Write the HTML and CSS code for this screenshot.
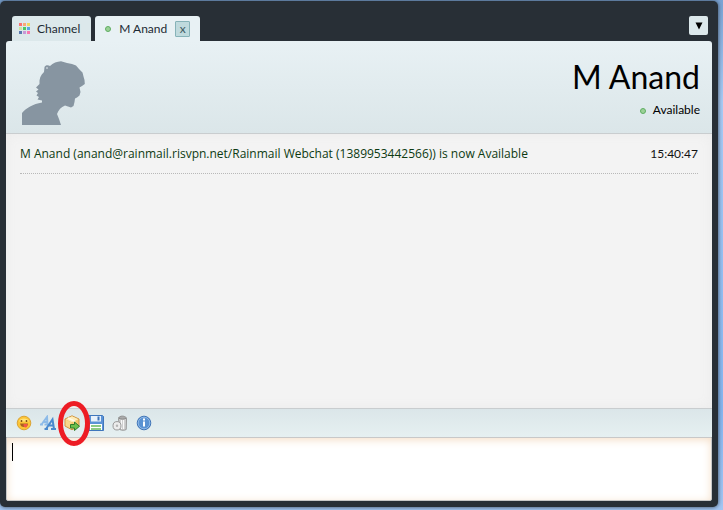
FILE: index.html
```html
<!DOCTYPE html>
<html lang="en">

<head>
  <meta charset="UTF-8">
  <meta name="viewport" content="width=device-width, initial-scale=1.0">
  <title>M Anand</title>
  <link rel="stylesheet" href="styles.css">
</head>

<body>
  <div class="window">
    <nav class="tabs">
      <button type="button" class="tab">
        <svg width="11" height="11" viewBox="0 0 11 11">
          <path fill="#fb7070" d="M0 0h3v3H0z" />
          <path fill="#f9a878" d="M4 0h3v3H4z" />
          <path fill="#f0d860" d="M8 0h3v3H8z" />
          <path fill="#c8e6a0" d="M0 4h3v3H0z" />
          <path fill="#4cc860" d="M4 4h3v3H4z" />
          <path fill="#58a8e0" d="M8 4h3v3H8z" />
          <path fill="#5878b0" d="M0 8h3v3H0z" />
          <path fill="#c898d8" d="M4 8h3v3H4z" />
          <path fill="#f878b0" d="M8 8h3v3H8z" />
        </svg>
        Channel
      </button>
      <div class="tab active">
        <span class="status-dot"></span>
        M Anand
        <button type="button" class="close" aria-label="Close chat">x</button>
      </div>
      <button type="button" class="tab-menu" aria-label="Chat list">
        <svg width="8" height="8" viewBox="0 0 8 8">
          <path d="M0.500 0.500h7L4 7.500z" />
        </svg>
      </button>
    </nav>

    <header class="contact">
      <svg width="64" height="64" viewBox="0 0 64 64">
        <path fill="#8795a1" d="M0 64V52C4 47 11 43 20 41.500V39.500L15.500 38.500 17 36 14.500 34.500 16 32 14 30.500 16.500 28.500 14 26.500 17.500 23C17 18 18.500 14 22 11L22.500 6C23.500 4 26 4 28 5 31 2 35 .5 39 .3L45 2 50 3 54 4.500 57 8 60.500 11.500 61.500 15.500 62.500 19 62.800 23 60 25 57.500 26.500 58.500 31 57.500 34.500 55 36.500 53 37.500 52.500 41 51.500 45 49 46.500 43 44.500C39 46 36.500 49 35 53L37 58 39 64z" />
        <circle cx="25" cy="7" r="1" fill="#c3cdd4" />
      </svg>
      <div class="contact-info">
        <h1>M Anand</h1>
        <p class="status"><span class="status-dot"></span> Available</p>
      </div>
    </header>

    <main class="messages">
      <div class="message">
        <span>M Anand (anand@rainmail.risvpn.net/Rainmail Webchat (1389953442566)) is now Available</span>
        <time>15:40:47</time>
      </div>
    </main>

    <div class="toolbar">
      <button type="button" class="tool" aria-label="Insert smiley">
        <svg width="16" height="16" viewBox="0 0 16 16">
          <circle cx="8" cy="8" r="6.800" fill="#fcc536" stroke="#dba437" />
          <path d="M2.800 6.500a5.500 4.500 0 0 1 10.400 0z" fill="#ffe27a" />
          <circle cx="5.500" cy="6" r=".9" fill="#7a4a12" />
          <circle cx="10.500" cy="6" r=".9" fill="#7a4a12" />
          <path d="M4 8.500h8c0 2.500-1.500 3.500-4 3.500S4.500 11 4 8.500z" fill="#a8641e" />
          <path d="M7.500 9h4c0 2-.5 3.500-2 3.500s-2-1.500-2-3.500z" fill="#f4564a" />
        </svg>
      </button>
      <button type="button" class="tool" aria-label="Change font">
        <svg width="16" height="16" viewBox="0 0 16 16">
          <path d="M0 9.500h3M4.500 9.500h4M1.500 9.500L7 2l.5 7.500M3.500 7h4" fill="none" stroke="#8dbbe8" stroke-width="2" />
          <path d="M4.500 14h3.500M11 14h5M6 14L12.500 4.500l1.500 9.500M9 10.500h5" fill="none" stroke="#4a8ace" stroke-width="2" />
        </svg>
      </button>
      <button type="button" class="tool" aria-label="Send file">
        <svg width="16" height="16" viewBox="0 0 16 16">
          <path d="M8 .8l7 3.200v7L8 14.800 1 11V4z" fill="#f3c66b" stroke="#cf9440" />
          <path d="M8 1.300l6.300 2.900L8 7.300 1.700 4.200z" fill="#fdebb8" />
          <path d="M1.700 4.800L7.500 7.600v6.200L1.700 10.700z" fill="#f9d88c" />
          <path d="M4 3l6.500 3v2.500" fill="none" stroke="#fffbe6" stroke-width="1.500" />
          <path d="M6.500 9.500h4V7l5 4.300-5 4.200v-2.500h-4z" fill="#6cc04c" stroke="#2f7d2b" />
        </svg>
        <svg class="highlight" width="32" height="45" viewBox="0 0 32 45">
          <ellipse cx="16" cy="22.500" rx="13.500" ry="20" fill="none" stroke="#ed1c24" stroke-width="5" />
        </svg>
      </button>
      <button type="button" class="tool" aria-label="Save chat">
        <svg width="16" height="16" viewBox="0 0 16 16">
          <path d="M.5.5h14l1 1v14H.5z" fill="#5b93d6" stroke="#3f76bc" />
          <path d="M3 1h10v5.500H3z" fill="#e8f1fb" />
          <path d="M9.500 1.500h2v4h-2z" fill="#3c72b8" />
          <path d="M2 9h12v6H2z" fill="#fff" />
          <path d="M3 11h10M3 14h10" stroke="#8ccb85" stroke-width="2" />
        </svg>
      </button>
      <button type="button" class="tool" aria-label="Clear chat">
        <svg width="16" height="16" viewBox="0 0 16 16">
          <path d="M6.500 3.500h8l-.3 11c-1.500 1-4.500 1-6.500 0z" fill="#cfcfcf" stroke="#979797" />
          <path d="M9.500 5v9M11.500 5v9" stroke="#f8f8f8" />
          <path d="M6.500 3C8 .5 12.500.5 14.500 3c-2 1.500-6 1.500-8 0z" fill="#aaa" stroke="#8c8c8c" />
          <ellipse cx="5" cy="10.800" rx="4" ry="4.200" fill="#ececec" stroke="#999" />
          <circle cx="5" cy="10.800" r="1.200" fill="#b4b4b4" />
        </svg>
      </button>
      <button type="button" class="tool" aria-label="User info">
        <svg width="16" height="16" viewBox="0 0 16 16">
          <circle cx="8" cy="8" r="6.800" fill="#5a92d2" stroke="#3f73b5" />
          <circle cx="8" cy="8" r="5.800" fill="none" stroke="#8fb8e6" />
          <path d="M7 3.500h2v2H7zM7 6.500h2v5H7z" fill="#fff" />
        </svg>
      </button>
    </div>
    <div class="composer">
      <textarea aria-label="Message"></textarea>
      <span class="caret"></span>
    </div>
  </div>
</body>

</html>
```
FILE: styles.css
```css
body {
  margin: 0;
  font-family: Lato, "Open Sans", sans-serif;
  font-size: 12px;
  color: #1c2a33;
  background: linear-gradient(#7aa3d4, #a9cbf5 20%, #86b6f0 80%, #a3c6f3);
}

h1,
p {
  margin: 0;
  font-weight: normal;
}

button {
  font-family: inherit;
  font-size: inherit;
  color: inherit;
  border: none;
  cursor: pointer;
}

svg {
  display: block;
  flex: none;
}

.window {
  display: flex;
  flex-direction: column;
  box-sizing: border-box;
  height: calc(100vh - 4px);
  margin: 1px 5px 3px 0;
  padding: 15px 6px 6px;
  border-radius: 5px;
  background: #282f36;
  box-shadow: 0 0 4px #34414e;
}

.tabs {
  display: flex;
  gap: 4px;
  padding: 0 4px 0 6px;
}

.tab {
  display: flex;
  align-items: center;
  gap: 7px;
  height: 25px;
  padding: 0 11px 0 7px;
  border-radius: 3px 3px 0 0;
  background: #dce8eb;
}

.tab.active {
  gap: 8px;
  padding: 0 10px;
  background: #e8f1f4;
}

.close {
  width: 15px;
  height: 16px;
  padding: 0;
  border: 1px solid #86b3b8;
  border-radius: 1px;
  background: #bfdadd;
  color: #3d5960;
  font-size: 12px;
  line-height: 14px;
}

.tab-menu {
  display: flex;
  align-items: center;
  justify-content: center;
  width: 19px;
  height: 19px;
  margin-left: auto;
  padding: 0;
  border-radius: 2px;
  background: #dce8eb;
  color: #000;
}

.status-dot {
  display: inline-block;
  box-sizing: border-box;
  width: 6px;
  height: 6px;
  border: 1px solid #5fae62;
  border-radius: 50%;
  background: #9bd197;
}

.contact {
  display: flex;
  justify-content: space-between;
  padding: 20px 12px 8px 16px;
  border-bottom: 1px solid #c9cdcf;
  border-radius: 3px 3px 0 0;
  background: linear-gradient(#e8f1f4, #dbe6e9);
}

.contact-info {
  text-align: right;
  color: #000;
}

h1 {
  font-size: 32px;
  line-height: 32px;
}

.status {
  margin-top: 9px;
  line-height: 16px;
}

.status .status-dot {
  margin-right: 4px;
}

.messages {
  flex: 1;
  padding: 12px 14px;
  background: #f3f3f3;
  box-shadow: inset 0 0 12px #ebebeb;
}

.message {
  display: flex;
  justify-content: space-between;
  padding-bottom: 11px;
  border-bottom: 1px dotted #b8b8b8;
  line-height: 16px;
}

.message span {
  font-family: "Open Sans", sans-serif;
  color: #0d3a12;
}

time {
  color: #111;
}

.toolbar {
  display: flex;
  align-items: center;
  gap: 8px;
  height: 28px;
  padding-left: 10px;
  border-top: 1px solid #c9cdcf;
  background: linear-gradient(#dbe6e9, #e6f0f1);
}

.tool {
  position: relative;
  padding: 0;
  background: none;
}

/* Ring drawn around the send file button */
.highlight {
  position: absolute;
  z-index: 1;
  top: -14px;
  left: -6px;
  pointer-events: none;
}

.composer {
  position: relative;
  display: flex;
}

.composer textarea {
  flex: 1;
  box-sizing: border-box;
  height: 64px;
  padding: 5px;
  border: 1px solid #c8c8c8;
  border-radius: 0 0 2px 2px;
  background: #fff;
  box-shadow: inset 0 2px 8px #f5dfc8;
  font-family: inherit;
  font-size: 14px;
  line-height: 18px;
  outline: none;
  resize: none;
}

.caret {
  position: absolute;
  top: 6px;
  left: 6px;
  width: 1px;
  height: 18px;
  background: #000;
}

.composer:focus-within .caret {
  display: none;
}
```
